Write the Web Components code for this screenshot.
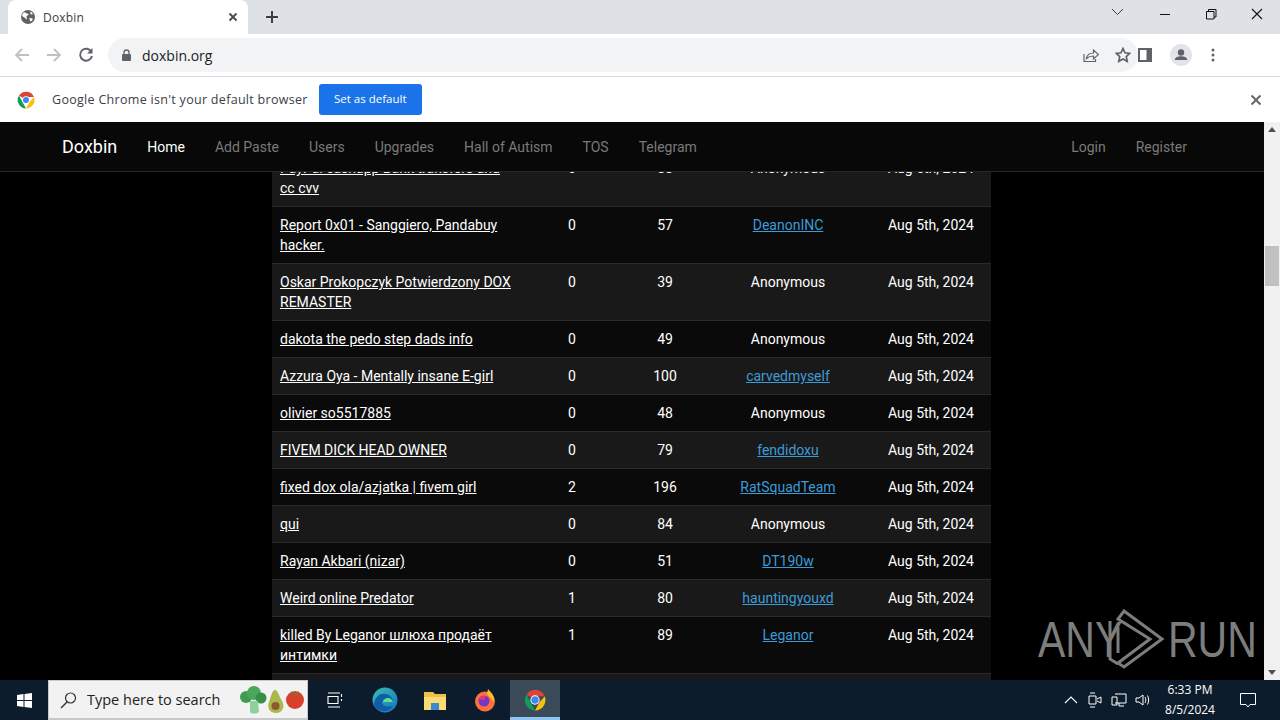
<!DOCTYPE html>
<html><head><meta charset="utf-8">
<style>
html,body{margin:0;padding:0;height:720px;overflow:hidden;background:#000}
body{display:flex;flex-direction:column;width:1280px;font-family:Roboto,sans-serif}
</style></head><body>
<chrome-tabs></chrome-tabs>
<chrome-toolbar></chrome-toolbar>
<chrome-infobar></chrome-infobar>
<site-view>
  <site-nav slot="nav"></site-nav>
  <paste-table></paste-table>
</site-view>
<win-taskbar></win-taskbar>
<script>
const def=(n,html,init)=>customElements.define(n,class extends HTMLElement{connectedCallback(){if(this.shadowRoot)return;this.attachShadow({mode:'open'}).innerHTML=html;init&&init(this.shadowRoot,this)}});

def('chrome-tabs',`<style>
:host{display:flex;height:34px;background:#dee1e6;flex:none;align-items:flex-end;font-family:"Open Sans","Liberation Sans",sans-serif}
.tab{margin-left:8px;width:240px;height:34px;background:#fff;border-radius:8px 8px 0 0;display:flex;align-items:center;box-sizing:border-box;padding:0 7px 0 13px;font-size:12px;color:#3c4043;position:relative}
.tab span{flex:1;margin-left:8px;letter-spacing:.2px}
.plus{margin-left:17px;height:34px;display:flex;align-items:center}
.sp{flex:1}
.win{display:flex;height:34px;align-items:center}
.win svg{display:block}
</style>
<div class="tab">
<svg width="14" height="14" viewBox="0 0 14 14"><circle cx="7" cy="7" r="7" fill="#5f6368"/><path d="M3 2.2c1.5.2 2 1 3 1.2s1.800.3 1.500 1.300-1.700.7-2 1.500.8 1.600.4 2.500S5 9.500 4.500 8.500 2 7 1.300 6 2 3 3 2.200zM9 8c1 0 2.200.2 2.600 1s-.8 2-1.800 2.300S9 10.500 8.800 10 8 8 9 8zM9.500 1.800c1 .4 2 1.200 2.500 2.200l-2 .4c-.6-.6-1-1.600-.5-2.600z" fill="#fff"/></svg>
<span>Doxbin</span>
<svg width="16" height="16" viewBox="0 0 16 16"><path d="M4.500 4.500l7 7M11.500 4.500l-7 7" stroke="#45484c" stroke-width="1.800"/></svg>
</div>
<div class="plus"><svg width="14" height="14" viewBox="0 0 14 14"><path d="M7 1v12M1 7h12" stroke="#3c4043" stroke-width="2"/></svg></div>
<div class="sp"></div>
<div class="win">
<svg width="46" height="34" viewBox="0 0 46 34" style="margin-right:0"><path d="M28 10l5.500 5.500L39 10" transform="translate(-12 -1)" fill="none" stroke="#3c4043" stroke-width="1"/></svg>
<svg width="46" height="34" viewBox="0 0 46 34"><path d="M18 14.500h10" stroke="#111" stroke-width="1"/></svg>
<svg width="46" height="34" viewBox="0 0 46 34"><path d="M18.500 11.500h7.500v7.500h-7.500zM20.500 11.500v-2h7.500v7.500h-2" fill="none" stroke="#111" stroke-width="1"/></svg>
<svg width="46" height="34" viewBox="0 0 46 34"><path d="M18 9l10 10M28 9l-10 10" stroke="#111" stroke-width="1.100"/></svg>
</div>`);

def('chrome-toolbar',`<style>
:host{display:flex;height:43px;background:#fff;flex:none;align-items:center;box-sizing:border-box;border-bottom:1px solid #dadce0;font-family:"Open Sans","Liberation Sans",sans-serif}
.btns{display:flex;align-items:center;gap:16px;padding-left:14px;width:108px;box-sizing:border-box;flex:none}
.omni{width:1030px;height:34px;border-radius:17px;background:#f1f3f4;display:flex;align-items:center;flex:none;box-sizing:border-box;padding:0 0 0 13px;font-size:14px;color:#202124}
.omni .u{margin-left:10px;flex:1}
.omni svg{flex:none}
.star{margin-left:16px;margin-right:7px}
.rt{display:flex;align-items:center;margin-left:0}
</style>
<div class="btns">
<svg width="16" height="16" viewBox="0 0 16 16"><path d="M15 8H2M8 2L2 8l6 6" fill="none" stroke="#bdc1c6" stroke-width="1.800"/></svg>
<svg width="16" height="16" viewBox="0 0 16 16"><path d="M1 8h13M8 2l6 6-6 6" fill="none" stroke="#bdc1c6" stroke-width="1.800"/></svg>
<svg width="16" height="16" viewBox="0 0 16 16"><path d="M13.500 5A6 6 0 1 0 14 9" fill="none" stroke="#5f6368" stroke-width="1.900"/><path d="M14.500 1v5.500H9z" fill="#5f6368"/></svg>
</div>
<div class="omni">
<svg width="11" height="13" viewBox="0 0 11 13"><rect x="1" y="5" width="9" height="7" rx="1" fill="#5f6368"/><path d="M3 5V3.500a2.500 2.500 0 0 1 5 0V5" fill="none" stroke="#5f6368" stroke-width="1.300"/></svg>
<span class="u">doxbin.org</span>
<svg width="16" height="16" viewBox="0 0 16 16"><path d="M1 7v7.500h11.500V12M3.500 11.500c.5-3.500 3-5.500 7-5.500V3l5 4.500-5 4.500V9c-3 0-5 .5-7 2.500z" fill="none" stroke="#5f6368" stroke-width="1.200"/></svg>
<svg class="star" width="16" height="16" viewBox="0 0 16 16"><path d="M8 1.500l2 4.300 4.700.6-3.400 3.200.9 4.700L8 12l-4.200 2.300.9-4.700L1.300 6.400 6 5.800z" fill="none" stroke="#5f6368" stroke-width="1.700"/></svg>
</div>
<div class="rt">
<svg width="14" height="14" viewBox="0 0 14 14" style="margin-left:0"><path fill="#5f6368" d="M0 0h14v14H0z"/><path fill="#fff" d="M2 2h6.500v10H2z"/></svg>
<svg width="22" height="22" viewBox="0 0 22 22" style="margin-left:18px"><circle cx="11" cy="11" r="11" fill="#e3e4ea"/><circle cx="11" cy="8.500" r="3.200" fill="#5f6368"/><path d="M4.800 16c0-3 3.500-3.800 6.200-3.800s6.200.8 6.200 3.800z" fill="#5f6368"/></svg>
<svg width="4" height="14" viewBox="0 0 4 14" style="margin-left:19px"><circle cx="2" cy="2" r="1.500" fill="#5f6368"/><circle cx="2" cy="7" r="1.500" fill="#5f6368"/><circle cx="2" cy="12" r="1.500" fill="#5f6368"/></svg>
</div>`);

def('chrome-infobar',`<style>
:host{display:flex;height:45px;background:#fff;flex:none;align-items:center;box-sizing:border-box;padding:0 0 0 17px;font-family:"Open Sans","Liberation Sans",sans-serif;font-size:12.500px;color:#3c4043}
.t{margin-left:17px;letter-spacing:.3px}
.b{margin-left:11px;width:103px;height:31px;background:#1a73e8;border-radius:3px;color:#fff;font-size:11.500px;display:flex;align-items:center;justify-content:center;padding-bottom:2px;box-sizing:border-box}
.sp{flex:1}
.x{margin-right:17px}
</style>
<svg width="18" height="18" viewBox="0 0 18 18"><path d="M9 9L2 4.500A8.500 8.500 0 0 1 17 6H9z" fill="#db4437"/><path d="M9 17.500A8.500 8.500 0 0 1 2 4.500L5.500 11z" fill="#0f9d58"/><path d="M17 6a8.500 8.500 0 0 1-8 11.500L12.500 11z" fill="#f4c20d"/><circle cx="9" cy="9" r="3.800" fill="#fff"/><circle cx="9" cy="9" r="3" fill="#4285f4"/></svg>
<span class="t">Google Chrome isn't your default browser</span>
<span class="b">Set as default</span>
<span class="sp"></span>
<svg class="x" width="14" height="14" viewBox="0 0 14 14"><path d="M2.500 2.500l9 9M11.500 2.500l-9 9" stroke="#5f6368" stroke-width="1.900"/></svg>`);

def('site-view',`<style>
:host{display:block;position:relative;height:558px;flex:none;background:#000;overflow:hidden}
.main{width:1264px;height:558px;overflow:hidden;box-sizing:border-box;padding:28px 0 0 272px}
.sb{position:absolute;right:0;top:0;width:16px;height:558px;background:#f1f1f1}
.thumb{position:absolute;left:1px;right:1px;top:124px;height:40px;background:#c1c1c1}
.up,.dn{position:absolute;left:4px;width:0;height:0;border-left:4px solid transparent;border-right:4px solid transparent}
.up{top:5px;border-bottom:5px solid #505050}
.dn{bottom:5px;border-top:5px solid #505050}
.wm{position:absolute;left:1038px;top:486px;width:196px;height:64px;display:flex;align-items:center;color:#7d7d7d}
.wm span{font:300 50px "Liberation Sans Narrow","Liberation Sans",sans-serif;transform:scaleX(.82);display:block;letter-spacing:0}
.wm .a{transform-origin:left;width:62px}
.wm .r{transform-origin:left;margin-left:2px}
.wm svg{flex:none;margin-left:6px}
</style>
<div class="main"><slot></slot></div>
<slot name="nav"></slot>
<div class="wm"><span class="a">ANY</span><svg width="60" height="62" viewBox="0 0 60 62"><path d="M4 12v38l8 5M18 2l38 28-38 28-6-4 32-24L12 10z" fill="none" stroke="#7d7d7d" stroke-width="3"/><path d="M12 18v26" stroke="#7d7d7d" stroke-width="3"/></svg><span class="r">RUN</span></div>
<div class="sb"><div class="up"></div><div class="thumb"></div><div class="dn"></div></div>`);

def('site-nav',`<style>
:host{position:absolute;left:0;top:0;width:1264px;height:50px;box-sizing:border-box;background:#080808;border-bottom:1px solid #262626;display:flex;align-items:center;padding-left:62px;font-size:14px;color:#7a7a7a}
.brand{font-size:18px;color:#fff;margin-right:30px}
a{margin-right:30px;color:inherit}
.on{color:#fff}
.sp{flex:1}
.r a:last-child{margin-right:77px}
.r{display:flex}
</style>
<span class="brand">Doxbin</span><a class="on">Home</a><a>Add Paste</a><a>Users</a><a>Upgrades</a><a>Hall of Autism</a><a>TOS</a><a>Telegram</a><span class="sp"></span><div class="r"><a>Login</a><a>Register</a></div>`);

const rows=[
["PayPal cashapp Bank transfers and cc cvv",0,88,"","Aug 5th, 2024"],
["Report 0x01 - Sanggiero, Pandabuy hacker.",0,57,"DeanonINC","Aug 5th, 2024"],
["Oskar Prokopczyk Potwierdzony DOX REMASTER",0,39,"","Aug 5th, 2024"],
["dakota the pedo step dads info",0,49,"","Aug 5th, 2024"],
["Azzura Oya - Mentally insane E-girl",0,100,"carvedmyself","Aug 5th, 2024"],
["olivier so5517885",0,48,"","Aug 5th, 2024"],
["FIVEM DICK HEAD OWNER",0,79,"fendidoxu","Aug 5th, 2024"],
["fixed dox ola/azjatka | fivem girl",2,196,"RatSquadTeam","Aug 5th, 2024"],
["qui",0,84,"","Aug 5th, 2024"],
["Rayan Akbari (nizar)",0,51,"DT190w","Aug 5th, 2024"],
["Weird online Predator",1,80,"hauntingyouxd","Aug 5th, 2024"],
["killed By Leganor шлюха продаёт интимки",1,89,"Leganor","Aug 5th, 2024"],
["Anonymous paste",0,60,"","Aug 5th, 2024"]];
def('paste-table',`<style>
:host{display:block;width:719px;font-size:14px;line-height:20px;color:#fff;font-family:Roboto,sans-serif}
.row{display:grid;grid-template-columns:247px 106px 80px 166px 120px;border-bottom:1px solid #2b2b2b;background:#0a0a0a}
.row:nth-child(odd){background:#191919}
.c{padding:8px;text-align:center}
.c:first-child{text-align:left;padding-right:8px}
a{color:#fff;text-decoration:underline}
a.u{color:#3d9bd8}
</style><div id="t"></div>`,(s)=>{
 s.getElementById('t').innerHTML=rows.map(r=>`<div class="row"><div class="c"><a>${r[0]}</a></div><div class="c">${r[1]}</div><div class="c">${r[2]}</div><div class="c">${r[3]?`<a class="u">${r[3]}</a>`:'Anonymous'}</div><div class="c">${r[4]}</div></div>`).join('');
});

def('win-taskbar',`<style>
:host{display:flex;height:40px;background:#0c1c2c;flex:none;align-items:center;color:#fff;font-family:"Open Sans","Liberation Sans",sans-serif;position:relative}
.start{width:48px;display:flex;justify-content:center}
.search{width:260px;height:40px;background:#f2f2f2;box-sizing:border-box;border:1px solid #c8c8c8;border-bottom-width:2px;display:flex;align-items:center;color:#222;font-size:14.500px;padding-left:10px}
.search span{margin-left:8px;flex:1}
.ti{width:50px;height:40px;display:flex;align-items:center;justify-content:center;flex:none}
.active{background:#3a4a58;border-bottom:3px solid #8ec5f0;box-sizing:border-box}
.sp{flex:1}
.tray{display:flex;align-items:center;height:40px}
.clock{width:70px;text-align:center;font-size:12px;line-height:20px;margin-left:4px}
</style>
<div class="start"><svg width="15" height="15" viewBox="0 0 15 15"><path fill="#fff" d="M0 2l6.500-1v6H0zM7.500 1L15 0v7H7.500zM0 8h6.500v6L0 13zM7.500 8H15v7l-7.500-1z"/></svg></div>
<div class="search"><svg width="20" height="20" viewBox="0 0 20 20"><circle cx="11.500" cy="8" r="5" fill="none" stroke="#333" stroke-width="1.200"/><path d="M8 12l-6 6" stroke="#333" stroke-width="1.400"/></svg><span>Type here to search</span>
<svg width="70" height="32" viewBox="0 0 70 32" style="margin-right:0"><g><circle cx="9" cy="13" r="6" fill="#3f9b52"/><circle cx="17" cy="9" r="7" fill="#4aa85c"/><circle cx="24" cy="14" r="5.500" fill="#388e47"/><path d="M13 17h8l1 11c-3 2-7 2-9 0z" fill="#8fd09c"/></g><path d="M38 6c3 0 4 6 7 11s1 12-6 12-9-6-7-11 3-12 6-12z" fill="#aab84a"/><circle cx="38.500" cy="22" r="4" fill="#8a5a34"/><circle cx="58" cy="16" r="9" fill="#d8402c"/><path d="M54 7l4 3 4-3-2 4h-4z" fill="#5a8a30"/></svg></div>
<div class="ti" style="margin-left:1px;width:51px"><svg width="16" height="16" viewBox="0 0 16 16"><path d="M1 1h12M1 15h12M1 4.500h10v7H1zM14.500 2v3M14.500 7v2" fill="none" stroke="#fff" stroke-width="1.100"/></svg></div>
<div class="ti"><svg width="26" height="26" viewBox="0 0 26 26"><defs><linearGradient id="e" x1="0" y1="0" x2="1" y2="1"><stop offset="0" stop-color="#35c1b0"/><stop offset="1" stop-color="#1b6fc2"/></linearGradient></defs><circle cx="13" cy="13" r="12.500" fill="url(#e)"/><path d="M2 17C3 9 9 6 14 7s7 5 7 8H10c0 3 4 5 8 4.500l3-1C19 23 14 25 10 24 5 23 2 20 2 17z" fill="#0f5ca8"/><path d="M11 15c0-3 3-4 5-4 3 0 4 2 5 4z" fill="#5ee08c"/></svg></div>
<div class="ti"><svg width="24" height="22" viewBox="0 0 24 22"><path d="M1 3h9l2 2h11v16H1z" fill="#f0c048"/><path d="M1 8h22v13H1z" fill="#fbdc74"/><path d="M8 14h8v7H8z" fill="#3a8ad0"/></svg></div>
<div class="ti"><svg width="24" height="24" viewBox="0 0 24 24"><circle cx="12" cy="13.500" r="10" fill="#ff7139"/><path d="M15 1c2 3 7 5 6 13L14 6z" fill="#ffbd2e"/><circle cx="11" cy="13" r="5.500" fill="#7a35c8"/><path d="M5 11c2-3 5-3 8-3l-2 4z" fill="#e23b6a"/></svg></div>
<div class="ti active" style="padding-top:3px"><svg width="22" height="22" viewBox="0 0 18 18"><path d="M9 9L2 4.500A8.500 8.500 0 0 1 17 6H9z" fill="#db4437"/><path d="M9 17.500A8.500 8.500 0 0 1 2 4.500L5.500 11z" fill="#0f9d58"/><path d="M17 6a8.500 8.500 0 0 1-8 11.500L12.500 11z" fill="#f4c20d"/><circle cx="9" cy="9" r="3.800" fill="#fff"/><circle cx="9" cy="9" r="3" fill="#4285f4"/></svg></div>
<div class="sp"></div>
<div class="tray">
<svg width="14" height="8" viewBox="0 0 14 8"><path d="M1 7l6-6 6 6" fill="none" stroke="#fff" stroke-width="1.100"/></svg>
<svg width="14" height="16" viewBox="0 0 14 16" style="margin-left:10px"><path d="M2 1h5M2 15h5M1 4h7v8H1zM9 7l4-2v6l-4-2" fill="none" stroke="#fff" stroke-width="1"/></svg>
<svg width="16" height="14" viewBox="0 0 16 14" style="margin-left:9px"><path d="M4 1h11v9H4M1 4h5v8H1zM8 10v3h5" fill="none" stroke="#fff" stroke-width="1"/></svg>
<svg width="16" height="14" viewBox="0 0 16 14" style="margin-left:8px"><path d="M1 5h3l4-3v10L4 9H1zM10 4c1 2 1 4 0 6M12.500 2.500c1.500 3 1.500 6 0 9" fill="none" stroke="#fff" stroke-width="1"/></svg>
<div class="clock">6:33 PM<br>8/5/2024</div>
<svg width="16" height="16" viewBox="0 0 16 16" style="margin:0 24px 0 15px"><path d="M.5 1.500h15v11H10L8 15l-2-2.500H.5z" fill="none" stroke="#fff" stroke-width="1"/></svg>
</div>`);
</script>
</body></html>
